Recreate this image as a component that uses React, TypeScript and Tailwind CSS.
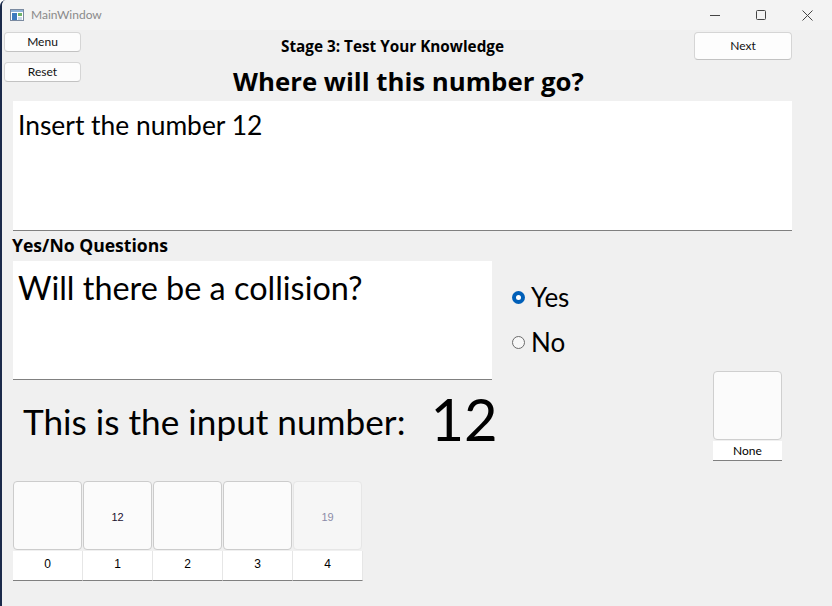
import React, { useState } from 'react';

const ui = { fontFamily: 'Lato, "Open Sans", sans-serif' };
const bold = { fontFamily: '"Open Sans", "Noto Sans", sans-serif' };
const arial = { fontFamily: '"Liberation Sans", Arial, sans-serif' };

function WinButton({ label, className }: { label: string; className: string }) {
  return (
    <button
      className={`bg-[#fdfdfd] border border-[#d5d5d5] border-b-[#c2c2c2] rounded-[4px] text-[12px] text-[#111] leading-none ${className}`}
    >
      {label}
    </button>
  );
}

function Radio({ checked, label, onClick }: { checked: boolean; label: string; onClick: () => void }) {
  return (
    <div className="flex items-center h-[30px] cursor-pointer" onClick={onClick}>
      {checked ? (
        <span className="w-[13px] h-[13px] rounded-full bg-[#005fb8] flex items-center justify-center">
          <span className="w-[5px] h-[5px] rounded-full bg-white" />
        </span>
      ) : (
        <span className="w-[13px] h-[13px] rounded-full border border-[#6b6b6b] bg-[#f7f7f7]" />
      )}
      <span className="ml-[6px] text-[26px] text-black leading-none">{label}</span>
    </div>
  );
}

export default function App() {
  const [answer, setAnswer] = useState('Yes');
  const buckets = [
    { idx: 0, value: '' },
    { idx: 1, value: '12' },
    { idx: 2, value: '' },
    { idx: 3, value: '' },
    { idx: 4, value: '19', faded: true },
  ];

  return (
    <div className="w-[832px] h-[606px] bg-[#f0f0f0] flex flex-col overflow-hidden border-l-2 border-l-[#1b2a4a] rounded-tl-[6px]" style={ui}>
      {/* title bar */}
      <div className="h-[30px] bg-[#f3f3f3] flex items-center shrink-0">
        <svg width="14" height="12" viewBox="0 0 14 12" className="ml-[8px]">
          <rect x="0.5" y="0.5" width="13" height="11" fill="#fff" stroke="#7a8aa0" />
          <rect x="1" y="1" width="12" height="2" fill="#8fb2d8" />
          <rect x="2" y="4" width="5" height="7" fill="#3d7bbf" />
          <rect x="8" y="4" width="4" height="3" fill="#6fb36b" />
          <rect x="8" y="8" width="4" height="3" fill="#c9d8e8" />
        </svg>
        <span className="ml-[7px] text-[12px] text-[#8a8a8a]">MainWindow</span>
        <div className="ml-auto flex items-center h-full text-[#333]">
          <div className="w-[46px] flex justify-center">
            <svg width="10" height="10" viewBox="0 0 10 10"><path d="M0 5.5h10" stroke="#444" strokeWidth="1" /></svg>
          </div>
          <div className="w-[46px] flex justify-center">
            <svg width="10" height="10" viewBox="0 0 10 10"><rect x="0.5" y="0.5" width="9" height="9" rx="1" fill="none" stroke="#444" /></svg>
          </div>
          <div className="w-[46px] flex justify-center mr-[2px]">
            <svg width="11" height="11" viewBox="0 0 11 11"><path d="M0.5 0.5l10 10M10.5 0.5l-10 10" stroke="#444" strokeWidth="1" /></svg>
          </div>
        </div>
      </div>

      {/* header */}
      <div className="flex h-[71px] shrink-0">
        <div className="ml-[2px] mt-[2px] w-[77px] flex flex-col gap-[10px]">
          <WinButton label="Menu" className="h-[20px] w-[77px]" />
          <WinButton label="Reset" className="h-[20px] w-[77px]" />
        </div>
        <div className="flex-1 flex flex-col items-center" style={bold}>
          <div className="ml-[10px] mt-[6px] text-[15.3px] font-bold text-black leading-[20px]">Stage 3: Test Your Knowledge</div>
          <div className="ml-[42px] mt-[8px] text-[25.8px] font-bold text-black leading-[34px]">Where will this number go?</div>
        </div>
        <div className="mt-[2px] mr-[40px]">
          <WinButton label="Next" className="h-[28px] w-[98px]" />
        </div>
      </div>

      {/* instruction box */}
      <div className="ml-[11px] w-[779px] h-[130px] bg-white border-b border-[#808080] shrink-0">
        <div className="pl-[5px] pt-[7px] text-[26.4px] leading-[34px] text-black">Insert the number 12</div>
      </div>

      <div className="ml-[10px] mt-[3px] text-[17.6px] font-bold text-black leading-[22px]" style={bold}>Yes/No Questions</div>

      <div className="flex mt-[5px]">
        <div className="w-[490px] shrink-0">
          <div className="ml-[11px] w-[479px] h-[119px] bg-white border-b border-[#808080]">
            <div className="pl-[5px] pt-[7px] text-[32.4px] leading-[40px] text-black">Will there be a collision?</div>
          </div>
          <div className="flex items-center h-[90px] pb-[6px] ml-[21px] whitespace-nowrap">
            <span className="text-[35.2px] text-black leading-none">This is the input number:</span>
            <span className="ml-[25px] text-[58px] text-black leading-none mt-[-6px]">12</span>
          </div>
        </div>
        <div className="flex-1 flex flex-col">
          <div className="ml-[20px] mt-[21px] flex flex-col gap-[15px]">
            <Radio checked={answer === 'Yes'} label="Yes" onClick={() => setAnswer('Yes')} />
            <Radio checked={answer === 'No'} label="No" onClick={() => setAnswer('No')} />
          </div>
          <div className="ml-[221px] mt-[14px] w-[69px] flex flex-col">
            <div className="w-[69px] h-[69px] bg-[#fbfbfb] border border-[#cfcfcf] rounded-[4px]" />
            <div className="mt-[1px] h-[20px] bg-white border-b border-[#808080] flex items-center justify-center text-[12px] text-black">
              None
            </div>
          </div>
        </div>
      </div>

      {/* buckets */}
      <div className="flex ml-[11px] mt-[11px]">
        {buckets.map(b => (
          <div key={b.idx} className="w-[70px] flex flex-col">
            <div
              className={`w-[69px] h-[69px] rounded-[4px] border flex items-center justify-center pt-[3px] text-[11px] ${
                b.faded ? 'bg-[#f6f6f6] border-[#e6e6e6] text-[#8c8ca8]' : 'bg-[#fbfbfb] border-[#cccccc] text-[#1a1030]'
              }`}
              style={arial}
            >
              {b.value}
            </div>
            <div
              className="mt-[1px] h-[30px] bg-white border-r border-r-[#e6e6e6] border-b border-b-[#808080] flex justify-center pt-[4px] text-[12px] text-black"
              style={arial}
            >
              {b.idx}
            </div>
          </div>
        ))}
      </div>
    </div>
  );
}
